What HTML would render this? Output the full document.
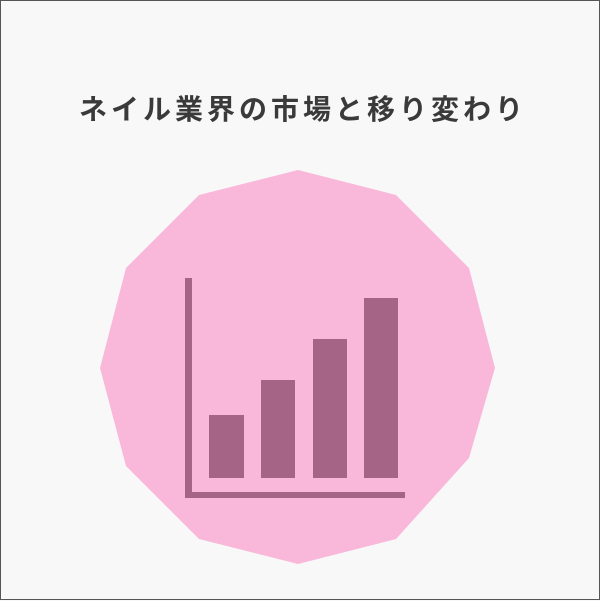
<!DOCTYPE html>
<html><head><meta charset="utf-8"><style>
html,body{margin:0;padding:0}
body{width:600px;height:600px;background:#f8f8f8;position:relative;overflow:hidden;box-sizing:border-box;border:1px solid #555}
.t{position:absolute;left:0;width:600px;top:87px;text-align:center;font:bold 28px "Noto Sans CJK JP",sans-serif;letter-spacing:4px;color:#3a3a3a;padding-left:4px;box-sizing:border-box}
svg{position:absolute;left:0;top:0}
</style></head><body>
<div class="t">ネイル業界の市場と移り変わり</div>
<svg width="600" height="600">
<polygon fill="#f9b8da" points="297,169 395,194 468,267 494,367 468,457 395,538 297,563 198,538 125,465 99,367 125,267 198,194"/>
<g fill="#a56385">
<rect x="184" y="277" width="7" height="220"/>
<rect x="184" y="491" width="220" height="6"/>
<rect x="208" y="414" width="35" height="63"/>
<rect x="260" y="379" width="34" height="98"/>
<rect x="312" y="338" width="34" height="139"/>
<rect x="363" y="297" width="34" height="180"/>
</g>
</svg>
</body></html>
